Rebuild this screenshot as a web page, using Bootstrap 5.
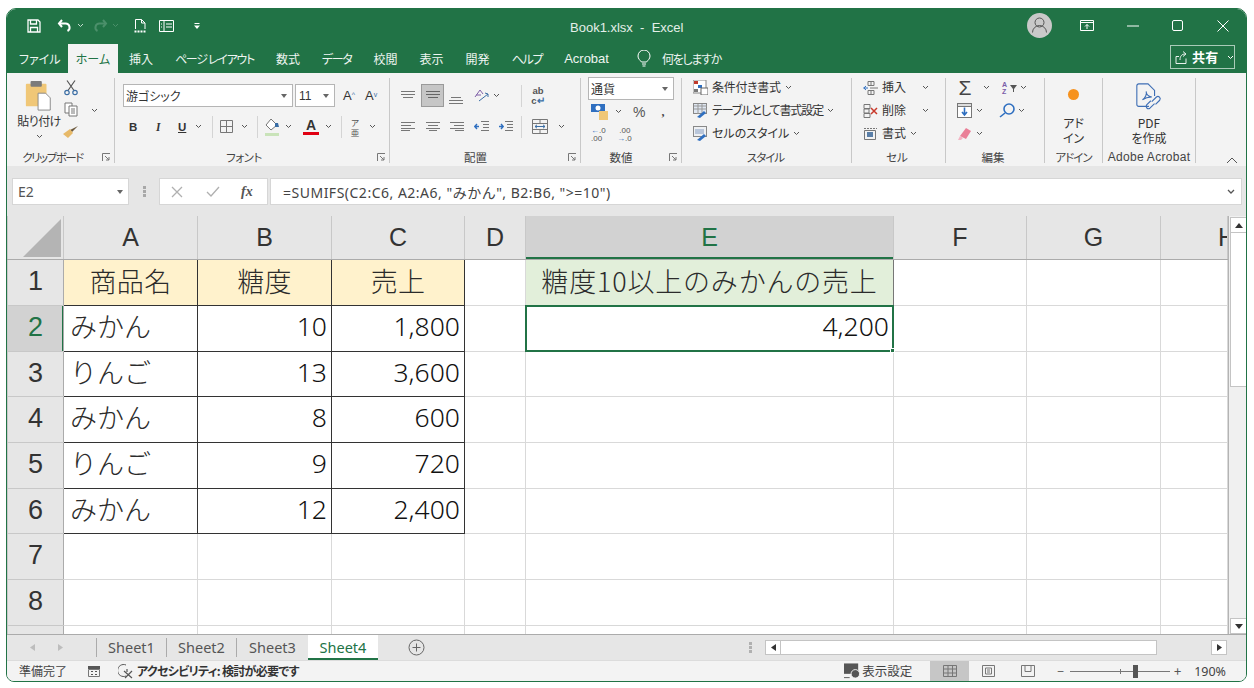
<!doctype html>
<html lang="ja"><head><meta charset="utf-8">
<link href="https://cdn.jsdelivr.net/npm/bootstrap@5.3.0/dist/css/bootstrap.min.css" rel="stylesheet">
<style>
html,body{margin:0;height:100%;background:#fff;overflow:hidden}
body{font-family:"Noto Sans CJK JP","Noto Sans",sans-serif;color:#333;font-size:12px}
svg{display:block;flex:none}
.xl-win{margin:8px 0 0 6px;width:1241px;height:674px;border:1px solid #217346;border-radius:10px 10px 8px 8px;overflow:hidden;display:flex;flex-direction:column;background:#f3f3f3}
.xl-top{background:#217346;color:#fff;height:64px;flex:none;font-feature-settings:"palt"}
.xl-title{height:35px;padding-left:20px;padding-bottom:2px}
.xl-name{font:13px "Liberation Sans",sans-serif;color:#e4efe9;margin-left:370px;padding-top:4px}
.xl-tabs{height:29px}
.xl-tab{height:29px;padding:0 11px;line-height:29px;font-size:12px;color:#eef5f1;white-space:nowrap}
.xl-tab-on{background:#f3f3f3;color:#217346;width:50px;padding:0;text-align:center}
.xl-tight{letter-spacing:-1.300px}
.xl-share{width:65px;height:24px;border:1px solid #a9cbb8;color:#fff;font-weight:700;font-size:13px;margin-right:11px;padding-left:4px}
.xl-rib{height:93px;flex:none;background:#f3f3f3;padding-top:5px;font-feature-settings:"palt"}
.xl-grp{border-right:1px solid #c8c8c8;height:85px;flex:none;display:flex;flex-direction:column;position:relative}
.xl-body{height:71px;flex:none;padding-top:1px}
.xl-cap{font-size:11.5px;text-align:center;color:#444;line-height:14px;white-space:nowrap;margin-top:1px}
.xl-launch{position:absolute;right:3px;bottom:1px}
.xl-row{height:23px;align-items:center;display:flex}
.xl-up{margin-top:-2px}
.xl-t{font-size:12px;color:#333;white-space:nowrap;line-height:1.2}
.xl-sel{height:23px;background:#fff;border:1px solid #b5b5b5;align-items:center;display:flex;justify-content:space-between;padding:0 5px 0 2px;font-size:12px}
.xl-vs{width:1px;height:22px;background:#d4d4d4;flex:none}
.xl-on{background:#c6c6c6;border:1px solid #9a9a9a}
.xl-fbar{height:49px;flex:none;background:#e6e6e6;padding:12px 4px 10px 5px}
.xl-box{background:#fff;border:1px solid #d6d6d6;height:27px}
.xl-sheet{height:419px;flex:none;display:flex;background:#fff;border-top:1px solid #e6e6e6}
.xl-sw{width:1221px;height:418px;overflow:hidden;flex:none}
.xl-tbl{border-collapse:collapse;table-layout:fixed;width:1221px;font-size:27px;color:#2b2b2b}
.xl-tbl td,.xl-tbl th{border:1px solid #d9d9d9;padding:0;white-space:nowrap;overflow:hidden;font-weight:300;line-height:1;position:relative}
.xl-tbl td{padding-bottom:5px}
.xl-tbl thead th{height:43px;background:#e6e6e6;border-color:#c8c8c8;border-bottom-color:#ababab;border-top:0;text-align:center;font:25px "Liberation Sans",sans-serif;color:#333}
.xl-tbl tbody th{background:#e6e6e6;border-color:#c8c8c8;border-right-color:#ababab;text-align:center;font:27px "Liberation Sans",sans-serif;color:#333;padding-bottom:1px}
.xl-cor svg{position:absolute;right:2px;bottom:2px}
.xl-tbl thead .xl-hsel{background:#d2d2d2;color:#217346;box-shadow:inset 0 -2px 0 #217346}
.xl-tbl tbody .xl-hrow{background:#d2d2d2;color:#217346;box-shadow:inset -1px 0 0 #217346}
.xl-tbl .xl-d{border-color:#333}
.xl-tbl .xl-l{padding-left:6px}
.xl-tbl .xl-c{text-align:center;letter-spacing:.3px;padding-bottom:3px}
.xl-tbl .xl-r{text-align:right;padding-right:4px;padding-bottom:4px;font:300 26.500px "Noto Sans",sans-serif;color:#111}
.xl-y{background:#fff2cc}
.xl-tbl .xl-g{background:#e2efda;border-color:#777;letter-spacing:.8px}
.xl-tbl .xl-cur{overflow:visible;border-color:transparent;z-index:2}
.xl-frame{position:absolute;left:-1px;top:-1px;right:-1px;bottom:-1px;border:2px solid #217346;pointer-events:none}
.xl-frame::after{content:"";position:absolute;right:-3px;bottom:-3px;width:5px;height:5px;background:#217346;border:1px solid #fff}
.xl-vscroll{width:19px;flex:none;background:#f0f0f0;padding:1px 1px 0 1px;border-left:1px solid #b4b4b4}
.xl-sb{width:17px;background:#fff;border:1px solid #c4c4c4;display:flex;align-items:center;justify-content:center}
.xl-tabbar{height:26px;flex:none;background:#e6e6e6;border-top:1px solid #ababab;display:flex;align-items:center}
.xl-sheetn{width:70px;text-align:center;font:14.500px "Noto Sans",sans-serif;color:#555;border-right:1px solid #ababab;height:19px;line-height:18px}
.xl-act{background:#fff;color:#217346;border:0;height:25px;line-height:24px;margin-top:-1px;border-bottom:2px solid #217346;width:70px;padding:0}
.xl-status{height:21px;flex:none;background:#f3f3f3;border-top:1px solid #dcdcdc;display:flex;align-items:center;font-size:12px;color:#444;font-feature-settings:"palt"}
.xl-view{width:39px;height:21px;display:flex;align-items:center;justify-content:center}
.xl-vact{background:#c6c6c6}
</style></head><body>
<div class="xl-win">
 <div class="xl-top">
  <div class="xl-title d-flex align-items-center">
   <svg width="14" height="14" viewBox="0 0 14 14" fill="none" stroke="#fff" stroke-width="1.3"><path d="M1 1h10l2 2v10H1z"/><path d="M3.5 1v4h6V1M3.5 13V8.500h7V13"/></svg>
   <svg class="ms-3" width="16" height="14" viewBox="0 0 16 14" fill="none" stroke="#fff" stroke-width="2"><path d="M5 1 2 4.500l3 3.500"/><path d="M2.500 4.500h6a4 4 0 0 1 2 7.500"/></svg>
   <svg class="ms-1" width="7" height="5" viewBox="0 0 7 5" fill="none" stroke="#c4dccf" stroke-width="1"><path d="m1 1 2.500 2.500L6 1"/></svg>
   <svg style="margin-left:8px" width="16" height="14" viewBox="0 0 16 14" fill="none" stroke="#4b8f6a" stroke-width="2"><path d="M11 1l3 3.500L11 8"/><path d="M13.500 4.500h-6a4 4 0 0 0-2 7.500"/></svg>
   <svg class="ms-1" width="7" height="5" viewBox="0 0 7 5" fill="none" stroke="#4b8f6a" stroke-width="1"><path d="m1 1 2.500 2.500L6 1"/></svg>
   <svg style="margin-left:15px" width="13" height="16" viewBox="0 0 13 16" fill="none" stroke="#fff"><path d="M1.500 11V1.500h6l3.500 3.500v6M7.500 1.500V5H11"/><path d="M.5 13.500h12" stroke-dasharray="2 1" stroke-width="2"/></svg>
   <svg style="margin-left:12px" width="15" height="12" viewBox="0 0 15 12" fill="none" stroke="#fff"><path d="M.5.500h14v11H.5zM5 .5v11M7 4h6M7 7h6M2 4h1M2 7h1"/></svg>
   <svg style="margin-left:20px" width="6" height="6" viewBox="0 0 6 6" fill="#fff"><path d="M.5 0h5v1h-5zM0 2.500h6L3 6z"/></svg>
   <span class="xl-name">Book1.xlsx&nbsp; -&nbsp; Excel</span>
   <div class="ms-auto d-flex align-items-center">
    <svg width="25" height="25" viewBox="0 0 25 25"><circle cx="12.500" cy="12.500" r="12.500" fill="#c9c9c9"/><circle cx="12.500" cy="9.500" r="4.500" fill="none" stroke="#555"/><path d="M5.500 19.500a7 7 0 0 1 14 0" fill="none" stroke="#555"/></svg>
    <svg style="margin-left:28px" width="14" height="11" viewBox="0 0 14 11" fill="none" stroke="#fff"><path d="M.5.500h13v10H.5zM.5 2.500h13"/><path d="M7 9V4.500M5 6.500l2-2 2 2"/></svg>
    <svg style="margin-left:33px" width="12" height="2" viewBox="0 0 12 2"><path d="M0 1h12" stroke="#fff"/></svg>
    <svg style="margin-left:33px" width="11" height="11" viewBox="0 0 11 11" fill="none" stroke="#fff"><rect x=".5" y=".5" width="10" height="10" rx="1.500"/></svg>
    <svg style="margin-left:34px;margin-right:17px" width="12" height="12" viewBox="0 0 12 12" stroke="#fff"><path d="m.5.500 11 11M11.500.500l-11 11"/></svg>
   </div>
  </div>
  <div class="xl-tabs d-flex">
   <div class="xl-tab" style="padding:0 0 0 12px;width:61px">ファイル</div>
   <div class="xl-tab xl-tab-on">ホーム</div>
   <div class="xl-tab">挿入</div><div class="xl-tab xl-tight">ページ レイアウト</div><div class="xl-tab">数式</div><div class="xl-tab xl-tight">データ</div><div class="xl-tab">校閲</div><div class="xl-tab">表示</div><div class="xl-tab">開発</div><div class="xl-tab xl-tight">ヘルプ</div>
   <div class="xl-tab" style="font:13px 'Liberation Sans',sans-serif;line-height:29px">Acrobat</div>
   <div class="d-flex align-items-center" style="margin-left:17px"><svg width="14" height="18" viewBox="0 0 14 18" fill="none" stroke="#fff"><path d="M4.500 12C3 10 1 9 1 6a6 6 0 0 1 12 0c0 3-2 4-3.500 6zM5 14h4M5.500 16h3"/></svg><div class="xl-tab xl-tight" style="padding-left:11px">何をしますか</div></div>
   <div class="ms-auto xl-share d-flex align-items-center" style="margin-top:1px"><svg width="13" height="13" viewBox="0 0 13 13" fill="none" stroke="#fff" stroke-width=".9"><path d="M1 5.500v7h10v-5M1 5.500h3M5 9c0-4 2-6 5-6M8 .5l3 2.500-3 2.500"/></svg><span class="ms-1" style="letter-spacing:.3px">共有</span><svg class="ms-2" width="7" height="5" viewBox="0 0 7 5" fill="none" stroke="#fff"><path d="m1 1 2.500 2.500L6 1"/></svg></div>
  </div>
 </div>

 <div class="xl-rib d-flex">
  <!-- clipboard -->
  <div class="xl-grp" style="width:108px">
   <div class="xl-body d-flex" style="padding-top:3px">
    <div class="d-flex flex-column align-items-center" style="width:50px;margin-left:7px">
     <svg width="28" height="30" viewBox="0 0 28 32"><rect x="0" y="3" width="22" height="24" rx="1" fill="#f0c777"/><rect x="5" y="0" width="12" height="6" rx="1" fill="#7b7b7b"/><path d="M13 13h8l5 5v13H13z" fill="#fff" stroke="#888"/></svg>
     <div class="xl-t" style="margin-top:3px;letter-spacing:-.6px">貼り付け</div>
     <svg style="margin-top:6px" width="7" height="5" viewBox="0 0 7 5" fill="none" stroke="#555"><path d="m1 1 2.500 2.500L6 1"/></svg>
    </div>
    <div class="d-flex flex-column align-items-center" style="width:20px;margin-left:-3px;margin-top:-2px">
     <svg width="14" height="17" viewBox="0 0 14 16" fill="none" stroke="#555" stroke-width="1.200"><path d="M3 1l7 10M11 1 4 11"/><circle cx="3" cy="13" r="2.200" stroke="#3b6ea5"/><circle cx="11" cy="13" r="2.200" stroke="#3b6ea5"/></svg>
     <svg style="margin-top:6px" width="14" height="15" viewBox="0 0 14 15" fill="#fff" stroke="#777"><path d="M1 1h7v10H1z"/><path d="M5 4h8v10H5zM7 7h4M7 9h4M7 11h4"/></svg>
     <svg style="margin-top:8px" width="16" height="14" viewBox="0 0 16 14"><path d="M15 1 9 7l-2-2z" fill="#6d5a3f"/><path d="M7 4 10 8 5 13 0 9z" fill="#e7b968"/></svg>
    </div>
    <svg style="margin-top:27px;margin-left:10px" width="7" height="5" viewBox="0 0 7 5" fill="none" stroke="#555"><path d="m1 1 2.500 2.500L6 1"/></svg>
   </div>
   <div class="xl-cap" style="padding-right:16px;letter-spacing:-1.500px">クリップボード</div>
   <svg class="xl-launch" width="9" height="9" viewBox="0 0 9 9" fill="none" stroke="#777"><path d="M.5 8V.5H8M3 3l4 4M7 4v3H4"/></svg>
  </div>
  <!-- font -->
  <div class="xl-grp" style="width:275px;padding-left:8px">
   <div class="xl-body" style="padding-top:6px">
    <div class="d-flex align-items-center">
     <div class="xl-sel" style="width:170px">游ゴシック<svg width="6" height="4" viewBox="0 0 6 4" fill="#666"><path d="M0 0h6L3 4z"/></svg></div>
     <div class="xl-sel" style="width:40px;margin-left:2px;font:12px 'Liberation Sans',sans-serif;padding-left:3px">11<svg width="6" height="4" viewBox="0 0 6 4" fill="#666"><path d="M0 0h6L3 4z"/></svg></div>
     <div class="xl-t" style="margin-left:8px;font:13px 'Liberation Sans'">A<sup style="font-size:7px;color:#3b6ea5">^</sup></div>
     <div class="xl-t" style="margin-left:10px;font:13px 'Liberation Sans'">A<sup style="font-size:7px;color:#3b6ea5">v</sup></div>
    </div>
    <div class="xl-row" style="margin-top:8px;padding-left:6px;font:700 11.500px 'Liberation Sans'">
     <span style="width:27px">B</span><span style="width:22px;font-style:italic;font-family:'Liberation Serif'">I</span><span class="text-decoration-underline" style="width:15px">U</span>
     <svg style="margin-left:2px" width="7" height="5" viewBox="0 0 7 5" fill="none" stroke="#555"><path d="m1 1 2.500 2.500L6 1"/></svg>
     <div class="xl-vs" style="margin-left:10px"></div>
     <svg style="margin-left:7px" width="13" height="13" viewBox="0 0 13 13" fill="none" stroke="#777"><path d="M.5.500h12v12H.5zM6.500.500v12M.5 6.500h12"/></svg>
     <svg style="margin-left:8px" width="7" height="5" viewBox="0 0 7 5" fill="none" stroke="#555"><path d="m1 1 2.500 2.500L6 1"/></svg>
     <div class="xl-vs" style="margin-left:9px"></div>
     <svg style="margin-left:7px" width="15" height="18" viewBox="0 0 15 18"><path d="M6 1 1 7l5 5 6-5z" fill="#fff" stroke="#777"/><path d="M10 5h3l1 4h-4z" fill="#3b6ea5"/><rect y="15" width="14" height="3" fill="#c9e3b9"/></svg>
     <svg style="margin-left:5px" width="7" height="5" viewBox="0 0 7 5" fill="none" stroke="#555"><path d="m1 1 2.500 2.500L6 1"/></svg>
     <div class="d-flex flex-column align-items-center" style="margin-left:11px;width:16px;line-height:1"><span style="font-size:14px">A</span><span style="display:block;width:16px;height:3px;background:#e00012"></span></div>
     <svg style="margin-left:6px" width="7" height="5" viewBox="0 0 7 5" fill="none" stroke="#555"><path d="m1 1 2.500 2.500L6 1"/></svg>
     <div class="xl-vs" style="margin-left:9px"></div>
     <span style="margin-left:8px;font:400 8.500px/10px 'Noto Sans CJK JP';width:10px;text-align:center;color:#555">ア<br>亜</span>
     <svg style="margin-left:9px" width="7" height="5" viewBox="0 0 7 5" fill="none" stroke="#555"><path d="m1 1 2.500 2.500L6 1"/></svg>
    </div>
   </div>
   <div class="xl-cap" style="padding-right:24px;letter-spacing:-.5px">フォント</div>
   <svg class="xl-launch" width="9" height="9" viewBox="0 0 9 9" fill="none" stroke="#777"><path d="M.5 8V.5H8M3 3l4 4M7 4v3H4"/></svg>
  </div>
  <!-- align -->
  <div class="xl-grp" style="width:191px;padding-left:11px">
   <div class="xl-body" style="padding-top:6px">
    <div class="d-flex align-items-center" style="height:23px">
     <svg width="14" height="9" viewBox="0 0 14 9" stroke="#777"><path d="M0 .5h14M0 3.500h14M2 6.500h10"/></svg>
     <div class="xl-on d-flex align-items-center justify-content-center" style="width:23px;height:23px;margin-left:6px"><svg width="14" height="9" viewBox="0 0 14 9" stroke="#666"><path d="M0 .5h14M0 3.500h14M2 6.500h10"/></svg></div>
     <svg style="margin-left:5px;margin-top:8px" width="14" height="9" viewBox="0 0 14 9" stroke="#777"><path d="M2 2.500h10M0 5.500h14M0 8.500h14"/></svg>
     <svg style="margin-left:11px" width="15" height="13" viewBox="0 0 15 13" fill="none" stroke="#777"><path d="M1 8 6 1l3 4M2 6h5" stroke="#8060a8"/><path d="M5 12 14 5M11 4l3 1v3" stroke="#3b6ea5"/></svg>
     <svg style="margin-left:4px" width="7" height="5" viewBox="0 0 7 5" fill="none" stroke="#555"><path d="m1 1 2.500 2.500L6 1"/></svg>
     <div class="xl-vs" style="margin-left:21px"></div>
     <span class="ms-2" style="font:700 9.500px/10px 'Liberation Sans';width:16px;text-align:center;color:#555">ab<br>c<span style="color:#3b6ea5">↵</span></span>
    </div>
    <div class="xl-row" style="margin-top:8px">
     <svg width="14" height="9" viewBox="0 0 14 9" stroke="#777"><path d="M0 .5h14M0 3.500h10M0 6.500h14M0 8.500h9"/></svg>
     <svg style="margin-left:11px" width="14" height="9" viewBox="0 0 14 9" stroke="#777"><path d="M0 .5h14M2 3.500h10M0 6.500h14M3 8.500h8"/></svg>
     <svg style="margin-left:10px" width="14" height="9" viewBox="0 0 14 9" stroke="#777"><path d="M0 .5h14M4 3.500h10M0 6.500h14M5 8.500h9"/></svg>
     <svg style="margin-left:10px" width="15" height="11" viewBox="0 0 15 11" fill="none" stroke="#777"><path d="M7 .5h8M9 3.500h6M9 6.500h6M7 9.500h8"/><path d="M5 5.500H.8M3 3 .8 5.500 3 8" stroke="#2f6fc0" stroke-width="1.400"/></svg>
     <svg style="margin-left:9px" width="15" height="11" viewBox="0 0 15 11" fill="none" stroke="#777"><path d="M7 .5h8M9 3.500h6M9 6.500h6M7 9.500h8"/><path d="M1 5.500h4M3 3l2.200 2.500L3 8" stroke="#2f6fc0" stroke-width="1.400"/></svg>
     <div class="xl-vs" style="margin-left:8px"></div>
     <svg style="margin-left:10px" width="16" height="15" viewBox="0 0 16 15" fill="none" stroke="#777"><path d="M.5.500h15v14H.5zM.5 4.500h15M.5 10.500h15M8 .500v4M8 10.500v4"/><path d="M3 7.500h10M5 5.800 3 7.500l2 1.700M11 5.800l2 1.700-2 1.700" stroke="#3b6ea5"/></svg>
     <svg style="margin-left:10px" width="7" height="5" viewBox="0 0 7 5" fill="none" stroke="#555"><path d="m1 1 2.500 2.500L6 1"/></svg>
    </div>
   </div>
   <div class="xl-cap" style="padding-right:30px">配置</div>
   <svg class="xl-launch" width="9" height="9" viewBox="0 0 9 9" fill="none" stroke="#777"><path d="M.5 8V.5H8M3 3l4 4M7 4v3H4"/></svg>
  </div>
  <!-- number -->
  <div class="xl-grp" style="width:101px;padding-left:7px">
   <div class="xl-body" style="padding-top:0">
    <div class="xl-sel" style="width:86px;margin-top:-1px">通貨<svg width="6" height="4" viewBox="0 0 6 4" fill="#666"><path d="M0 0h6L3 4z"/></svg></div>
    <div class="xl-row" style="padding-left:3px">
     <svg width="18" height="16" viewBox="0 0 18 16"><rect width="14" height="8" fill="#2f6fc0"/><circle cx="7" cy="4" r="2.500" fill="#fff"/><rect x="8" y="7" width="9" height="9" fill="#f0c777"/></svg>
     <svg style="margin-left:6px" width="7" height="5" viewBox="0 0 7 5" fill="none" stroke="#555"><path d="m1 1 2.500 2.500L6 1"/></svg>
     <span style="margin-left:11px;font:14px 'Liberation Sans';color:#555">%</span>
     <span style="margin-left:16px;font:700 12px/1 'Liberation Serif';color:#444">,</span>
    </div>
    <div class="xl-row" style="padding-left:3px;font:8px/8px 'Liberation Sans';color:#555">
     <span style="width:26px"><span style="color:#2f6fc0">←</span>.0<br>.00</span><span>&nbsp;.00<br><span style="color:#2f6fc0">→</span>.0</span>
    </div>
   </div>
   <div class="xl-cap" style="padding-right:27px">数値</div>
   <svg class="xl-launch" width="9" height="9" viewBox="0 0 9 9" fill="none" stroke="#777"><path d="M.5 8V.5H8M3 3l4 4M7 4v3H4"/></svg>
  </div>
  <!-- style -->
  <div class="xl-grp" style="width:170px;padding-left:11px">
   <div class="xl-body" style="padding-top:0">
    <div class="xl-row xl-up"><svg width="15" height="15" viewBox="0 0 15 15"><rect width="13" height="13" fill="#fff" stroke="#888"/><rect x="1" y="1" width="4" height="3" fill="#c0392b"/><rect x="5" y="5" width="4" height="3" fill="#2f6fc0"/><rect x="1" y="9" width="4" height="3" fill="#7a7a7a"/><rect x="8" y="8" width="7" height="7" fill="#fff" stroke="#666"/></svg><span class="xl-t" style="margin-left:4px;letter-spacing:-.3px">条件付き書式</span><svg class="ms-1" width="7" height="5" viewBox="0 0 7 5" fill="none" stroke="#555"><path d="m1 1 2.500 2.500L6 1"/></svg></div>
    <div class="xl-row"><svg width="15" height="15" viewBox="0 0 15 15"><rect x=".5" y=".5" width="13" height="10" fill="#dfe7f2" stroke="#888"/><path d="M1 3h13M1 6h13M5 1v10M9 1v10" stroke="#999"/><path d="m4 14 7-6 2 2-6 5z" fill="#2f6fc0"/></svg><span class="xl-t" style="margin-left:4px;letter-spacing:-1.100px">テーブルとして書式設定</span><svg class="ms-1" width="7" height="5" viewBox="0 0 7 5" fill="none" stroke="#555"><path d="m1 1 2.500 2.500L6 1"/></svg></div>
    <div class="xl-row"><svg width="15" height="15" viewBox="0 0 15 15"><rect x=".5" y=".5" width="13" height="10" fill="#eef0f3" stroke="#888"/><rect x="2" y="3" width="9" height="5" fill="#b9c6da"/><path d="m4 14 7-6 2 2-6 5z" fill="#2f6fc0"/></svg><span class="xl-t" style="margin-left:4px">セルのスタイル</span><svg class="ms-1" width="7" height="5" viewBox="0 0 7 5" fill="none" stroke="#555"><path d="m1 1 2.500 2.500L6 1"/></svg></div>
   </div>
   <div class="xl-cap" style="padding-right:13px;letter-spacing:-1px">スタイル</div>
  </div>
  <!-- cell -->
  <div class="xl-grp" style="width:94px;padding-left:11px">
   <div class="xl-body" style="padding-top:0">
    <div class="xl-row xl-up"><svg width="15" height="14" viewBox="0 0 15 14" fill="none" stroke="#777"><path d="M5 .5h6v4H5zM8 .5v4M5 9.500h6v4H5zM8 9.500v4M7 7h8"/><path d="M5 7H.5M3 5 .8 7 3 9" stroke="#2f6fc0"/></svg><span class="xl-t" style="margin-left:4px;width:40px">挿入</span><svg width="7" height="5" viewBox="0 0 7 5" fill="none" stroke="#555"><path d="m1 1 2.500 2.500L6 1"/></svg></div>
    <div class="xl-row"><svg width="15" height="14" viewBox="0 0 15 14" fill="none" stroke="#777"><path d="M1 .5h6v4H1zM1 9.500h6v4H1zM1 5h5v4H1z"/><path d="m8 4 6 6M14 4l-6 6" stroke="#c8392b" stroke-width="1.500"/></svg><span class="xl-t" style="margin-left:4px;width:40px">削除</span><svg width="7" height="5" viewBox="0 0 7 5" fill="none" stroke="#555"><path d="m1 1 2.500 2.500L6 1"/></svg></div>
    <div class="xl-row"><svg width="15" height="15" viewBox="0 0 15 15" fill="none" stroke="#777"><path d="M1 2.500h13" stroke-dasharray="2 1"/><path d="M1.500 4.500h11v9h-11z"/><rect x="4" y="6" width="6" height="5" fill="#5a7fa8" stroke="none"/></svg><span class="xl-t" style="margin-left:4px">書式</span><svg class="ms-1" width="7" height="5" viewBox="0 0 7 5" fill="none" stroke="#555"><path d="m1 1 2.500 2.500L6 1"/></svg></div>
   </div>
   <div class="xl-cap" style="padding-right:14px">セル</div>
  </div>
  <!-- edit -->
  <div class="xl-grp" style="width:99px;padding-left:11px">
   <div class="xl-body" style="padding-top:0">
    <div class="xl-row xl-up"><span class="text-center" style="width:16px;font:400 21px/1 'Liberation Sans';color:#444">Σ</span><svg style="margin-left:10px" width="7" height="5" viewBox="0 0 7 5" fill="none" stroke="#555"><path d="m1 1 2.500 2.500L6 1"/></svg><span style="width:14px;margin-left:12px;font:700 7px/7px 'Liberation Sans';color:#7a5ca8;text-align:left">A<br>Z</span><svg style="margin-left:-6px" width="7" height="8" viewBox="0 0 7 8" fill="#555"><path d="M0 1h7L4 5v3H3V5z"/></svg><svg style="margin-left:3px" width="7" height="5" viewBox="0 0 7 5" fill="none" stroke="#555"><path d="m1 1 2.500 2.500L6 1"/></svg></div>
    <div class="xl-row"><svg width="15" height="15" viewBox="0 0 15 15"><rect x=".5" y=".5" width="14" height="14" fill="#fff" stroke="#777"/><rect x=".5" y=".5" width="14" height="3" fill="#ddd" stroke="#777"/><path d="M7.500 4.500v7M5 9l2.500 3L10 9" fill="none" stroke="#2f6fc0" stroke-width="1.600"/></svg><svg style="margin-left:4px" width="7" height="5" viewBox="0 0 7 5" fill="none" stroke="#555"><path d="m1 1 2.500 2.500L6 1"/></svg><svg style="margin-left:16px" width="16" height="15" viewBox="0 0 16 15" fill="none" stroke="#2f6fc0" stroke-width="1.600"><circle cx="10" cy="6" r="5"/><path d="M6 10l-5 4"/></svg><svg style="margin-left:3px" width="7" height="5" viewBox="0 0 7 5" fill="none" stroke="#555"><path d="m1 1 2.500 2.500L6 1"/></svg></div>
    <div class="xl-row"><svg width="15" height="13" viewBox="0 0 15 13"><path d="M9 1l5 3-5 8-6-3z" fill="#ea7f97"/><path d="M3 9 6 11 4 13H1z" fill="#f4b4c3"/></svg><svg style="margin-left:4px" width="7" height="5" viewBox="0 0 7 5" fill="none" stroke="#555"><path d="m1 1 2.500 2.500L6 1"/></svg></div>
   </div>
   <div class="xl-cap" style="padding-right:15px">編集</div>
  </div>
  <!-- addin -->
  <div class="xl-grp align-items-center" style="width:58px">
   <div class="xl-body d-flex flex-column align-items-center">
    <span class="d-block rounded-circle" style="width:11px;height:11px;background:#f6921e;margin-top:10px"></span>
    <span class="xl-t text-center" style="margin-top:15px;line-height:15px">アド<br>イン</span>
   </div>
   <div class="xl-cap" style="letter-spacing:-1px">アドイン</div>
  </div>
  <!-- acrobat -->
  <div class="xl-grp align-items-center" style="width:93px">
   <div class="xl-body d-flex flex-column align-items-center">
    <svg style="margin-top:4px" width="27" height="28" viewBox="0 0 27 30" fill="none" stroke="#3f6fb5" stroke-width="1.200"><path d="M14 25H3a2 2 0 0 1-2-2V3a2 2 0 0 1 2-2h10l7 7v6"/><path d="M7 18c3-2 5-6 4-9 0 3 2 5 6 6-3 0-6 0-10 3z"/><path d="M17 20l5-5a2.500 2.500 0 0 1 3.500 3.500L21 23M20 22l-5 5a2.500 2.500 0 0 1-3.500-3.500L16 19"/></svg>
    <span class="xl-t text-center" style="margin-top:4px;line-height:15px">PDF<br>を作成</span>
   </div>
   <div class="xl-cap" style="font:12px/14px 'Liberation Sans';letter-spacing:.3px">Adobe Acrobat</div>
  </div>
  <div class="flex-grow-1 d-flex justify-content-end align-items-end" style="height:86px;padding:0 8px 0 0"><svg width="12" height="7" viewBox="0 0 12 7" fill="none" stroke="#555"><path d="m1 6 5-5 5 5"/></svg></div>
 </div>

 <div class="xl-fbar d-flex">
  <div class="xl-box d-flex align-items-center justify-content-between" style="width:117px;padding:0 5px;font:14px 'Noto Sans';color:#555">E2<svg width="6" height="4" viewBox="0 0 6 4" fill="#666"><path d="M0 0h6L3 4z"/></svg></div>
  <div class="d-flex align-items-center justify-content-center" style="width:30px"><svg width="3" height="11" viewBox="0 0 3 11" fill="#a8a8a8"><rect width="3" height="3"/><rect y="4" width="3" height="3"/><rect y="8" width="3" height="3"/></svg></div>
  <div class="xl-box d-flex align-items-center" style="width:109px;padding-left:11px">
   <svg width="12" height="12" viewBox="0 0 12 12" stroke="#b0b0b0" stroke-width="1.300"><path d="m1 1 10 10M11 1 1 11"/></svg>
   <svg style="margin-left:23px" width="14" height="11" viewBox="0 0 14 11" fill="none" stroke="#b0b0b0" stroke-width="1.300"><path d="m1 6 4 4 8-9"/></svg>
   <i style="margin-left:21px;font:italic 700 14px 'Liberation Serif';color:#555">fx</i>
  </div>
  <div class="xl-box d-flex align-items-center flex-grow-1" style="margin-left:2px;padding:0 6px 0 12px;font:14px 'Noto Sans','Noto Sans CJK JP',sans-serif;letter-spacing:.5px;color:#444;white-space:nowrap">=SUMIFS(C2:C6, A2:A6, "みかん", B2:B6, "&gt;=10")<svg class="ms-auto" width="8" height="5" viewBox="0 0 8 5" fill="none" stroke="#555" stroke-width="1.300"><path d="m1 1 3 3 3-3"/></svg></div>
 </div>

 <div class="xl-sheet">
  <div class="xl-sw">
  <table class="xl-tbl">
   <colgroup><col style="width:56px"><col style="width:134px"><col style="width:134px"><col style="width:133px"><col style="width:61px"><col style="width:368px"><col style="width:133px"><col style="width:134px"><col></colgroup>
   <thead><tr><th class="xl-cor"><svg width="38" height="38" viewBox="0 0 38 38"><path d="M38 0v38H0z" fill="#b4b4b4"/></svg></th><th>A</th><th>B</th><th>C</th><th>D</th><th class="xl-hsel">E</th><th>F</th><th>G</th><th class="text-start" style="padding-left:57px">H</th></tr></thead>
   <tbody>
    <tr style="height:46px"><th>1</th><td class="xl-d xl-y xl-c">商品名</td><td class="xl-d xl-y xl-c">糖度</td><td class="xl-d xl-y xl-c">売上</td><td></td><td class="xl-g xl-c">糖度10以上のみかんの売上</td><td></td><td></td><td></td></tr>
    <tr style="height:46px"><th class="xl-hrow">2</th><td class="xl-d xl-l">みかん</td><td class="xl-d xl-r">10</td><td class="xl-d xl-r">1,800</td><td></td><td class="xl-cur xl-r">4,200<span class="xl-frame"></span></td><td></td><td></td><td></td></tr>
    <tr style="height:45px"><th>3</th><td class="xl-d xl-l">りんご</td><td class="xl-d xl-r">13</td><td class="xl-d xl-r">3,600</td><td></td><td></td><td></td><td></td><td></td></tr>
    <tr style="height:46px"><th>4</th><td class="xl-d xl-l">みかん</td><td class="xl-d xl-r">8</td><td class="xl-d xl-r">600</td><td></td><td></td><td></td><td></td><td></td></tr>
    <tr style="height:46px"><th>5</th><td class="xl-d xl-l">りんご</td><td class="xl-d xl-r">9</td><td class="xl-d xl-r">720</td><td></td><td></td><td></td><td></td><td></td></tr>
    <tr style="height:45px"><th>6</th><td class="xl-d xl-l">みかん</td><td class="xl-d xl-r">12</td><td class="xl-d xl-r">2,400</td><td></td><td></td><td></td><td></td><td></td></tr>
    <tr style="height:46px"><th>7</th><td></td><td></td><td></td><td></td><td></td><td></td><td></td><td></td></tr>
    <tr style="height:46px"><th>8</th><td></td><td></td><td></td><td></td><td></td><td></td><td></td><td></td></tr>
    <tr style="height:46px"><th></th><td></td><td></td><td></td><td></td><td></td><td></td><td></td><td></td></tr>
   </tbody>
  </table>
  </div>
  <div class="xl-vscroll d-flex flex-column">
   <div class="xl-sb" style="height:16px"><svg width="8" height="5" viewBox="0 0 8 5" fill="#333"><path d="M0 5h8L4 0z"/></svg></div>
   <div class="xl-sb" style="height:154px;border-top:0"></div>
   <div class="flex-grow-1"></div>
   <div class="xl-sb" style="height:16px"><svg width="8" height="5" viewBox="0 0 8 5" fill="#333"><path d="M0 0h8L4 5z"/></svg></div>
  </div>
 </div>

 <div class="xl-tabbar">
  <svg style="margin-left:23px" width="5" height="7" viewBox="0 0 5 7" fill="#bdbdbd"><path d="M5 0v7L0 3.500z"/></svg>
  <svg style="margin-left:23px" width="5" height="7" viewBox="0 0 5 7" fill="#bdbdbd"><path d="M0 0v7l5-3.500z"/></svg>
  <div style="width:1px;height:19px;background:#ababab;margin-left:33px"></div>
  <div class="xl-sheetn">Sheet1</div><div class="xl-sheetn">Sheet2</div><div class="xl-sheetn" style="border-right:0;width:71px">Sheet3</div>
  <div class="xl-sheetn xl-act">Sheet4</div>
  <svg style="margin-left:30px" width="17" height="17" viewBox="0 0 17 17" fill="none" stroke="#666"><circle cx="8.500" cy="8.500" r="7.500"/><path d="M8.500 4.500v8M4.500 8.500h8"/></svg>
  <svg style="margin-left:324px" width="3" height="11" viewBox="0 0 3 11" fill="#b0b0b0"><rect width="3" height="3"/><rect y="4" width="3" height="3"/><rect y="8" width="3" height="3"/></svg>
  <div class="xl-sb" style="margin-left:13px;width:16px;height:15px"><svg width="5" height="7" viewBox="0 0 5 7" fill="#333"><path d="M5 0v7L0 3.500z"/></svg></div>
  <div class="xl-sb" style="width:376px;height:15px;border-left:0"></div>
  <div class="flex-grow-1"></div>
  <div class="xl-sb" style="width:16px;height:15px;margin-right:19px"><svg width="5" height="7" viewBox="0 0 5 7" fill="#333"><path d="M0 0v7l5-3.500z"/></svg></div>
 </div>

 <div class="xl-status">
  <span style="margin-left:12px;font-feature-settings:normal">準備完了</span>
  <svg style="margin-left:21px" width="12" height="12" viewBox="0 0 12 12" fill="#555"><rect y="1" width="12" height="3"/><path d="M.5 4.500h11v7H.5z" fill="none" stroke="#777"/><rect x="3" y="6" width="2" height="1"/><rect x="7" y="6" width="2" height="1"/><rect x="3" y="9" width="2" height="1"/><rect x="7" y="9" width="2" height="1"/></svg>
  <svg style="margin-left:18px" width="17" height="16" viewBox="0 0 17 16" fill="none" stroke="#555"><path d="M8 2a6 6 0 1 0 0 11"/><path d="M9 6v3M6 8l8 7M14 8l-7 7" stroke-width="1.200"/></svg>
  <b style="margin-left:2px;font-size:12px;letter-spacing:-.7px;color:#333">アクセシビリティ: 検討が必要です</b>
  <svg class="ms-auto" width="17" height="16" viewBox="0 0 18 16"><rect width="15" height="11" fill="#555"/><circle cx="12" cy="11" r="4.500" fill="#555" stroke="#f3f3f3"/><path d="M0 15h6" stroke="#555"/></svg>
  <span style="margin-left:1px;font-size:12.500px;width:55px;color:#444;white-space:nowrap">表示設定</span>
  <div class="xl-view xl-vact" style="margin-left:13px"><svg width="14" height="12" viewBox="0 0 14 12" fill="none" stroke="#777"><path d="M.5.500h13v11H.5zM5 .5v11M9.500.5v11M.5 4h13M.5 8h13"/></svg></div>
  <div class="xl-view"><svg width="13" height="12" viewBox="0 0 13 12" fill="none" stroke="#777"><path d="M.5.500h12v11H.5zM3.500 3h6v6h-6zM5 5h3M5 7h3"/></svg></div>
  <div class="xl-view"><svg width="14" height="12" viewBox="0 0 14 12" fill="none" stroke="#777"><path d="M.5.500h13v11H.5zM4 .5v6h6v-6"/></svg></div>
  <span style="margin-left:10px;color:#555">−</span>
  <div class="position-relative" style="width:100px;height:1px;background:#777;margin-left:6px"><span class="position-absolute" style="left:50px;top:-2px;width:1px;height:5px;background:#777"></span><span class="position-absolute" style="left:63px;top:-6px;width:5px;height:13px;background:#555"></span></div>
  <span style="margin-left:4px;color:#555;font-size:13px">+</span>
  <span style="margin-left:13px;margin-right:20px;font:12.500px 'Noto Sans';color:#444">190%</span>
 </div>
</div>
<script src="https://cdn.jsdelivr.net/npm/bootstrap@5.3.0/dist/js/bootstrap.bundle.min.js"></script>
</body></html>
